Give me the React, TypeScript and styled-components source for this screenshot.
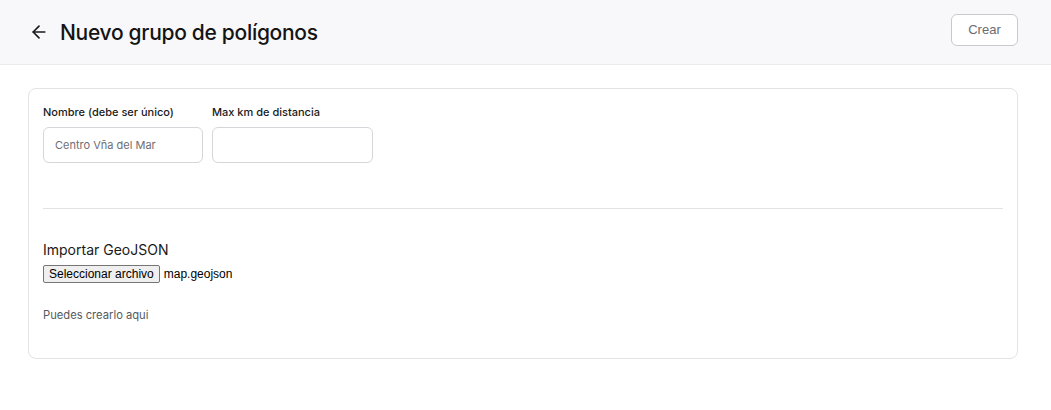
import React from "react";
import styled, { createGlobalStyle } from "styled-components";

const Global = createGlobalStyle`
  html, body { margin: 0; padding: 0; background: #ffffff; }
  body { font-family: Inter, "Noto Sans", sans-serif; color: #1a1a1a; }
  * { box-sizing: border-box; }
`;

const Header = styled.header`
  height: 65px;
  background: #f8f8fa;
  border-bottom: 1px solid #ececef;
  display: flex;
  align-items: center;
  justify-content: space-between;
  padding: 0 33px 0 29px;
`;

const TitleGroup = styled.div`
  display: flex;
  align-items: center;
  gap: 11px;
`;

const BackButton = styled.button`
  border: 0;
  background: transparent;
  padding: 0;
  display: flex;
  align-items: center;
  color: #1a1a1a;
  cursor: pointer;
`;

const Title = styled.h1`
  margin: 0;
  font-size: 21px;
  font-weight: 500;
  letter-spacing: -0.3px;
  color: #141414;
`;

const CreateButton = styled.button`
  width: 67px;
  height: 32px;
  border: 1px solid #c9c9cc;
  border-radius: 6px;
  background: #ffffff;
  color: #6b6b70;
  font-family: "Liberation Sans", Arial, sans-serif;
  font-size: 13px;
  margin-top: -5px;
`;

const Main = styled.main`
  padding: 23px 33px 0 28px;
`;

const Card = styled.section`
  border: 1px solid #e3e3e6;
  border-radius: 8px;
  padding: 16px 14px 35px 14px;
  display: flex;
  flex-direction: column;
`;

const FieldRow = styled.div`
  display: flex;
  gap: 9px;
  padding-bottom: 45px;
`;

const Field = styled.label`
  display: flex;
  flex-direction: column;
  gap: 7px;
`;

const LabelText = styled.span`
  font-size: 11px;
  font-weight: 500;
  color: #1a1a1a;
  line-height: 15px;
`;

const TextInput = styled.input<{ $wide?: boolean }>`
  width: ${(p) => (p.$wide ? "161px" : "160px")};
  height: 36px;
  border: 1px solid #d6d6da;
  border-radius: 6px;
  padding: 0 11px;
  font-family: Inter, "Noto Sans", sans-serif;
  font-size: 11px;
  color: #1a1a1a;
  outline: none;
  &::placeholder { color: #6e6e73; }
`;

const Divider = styled.hr`
  margin: 0;
  border: 0;
  border-top: 1px solid #e3e3e6;
`;

const ImportSection = styled.div`
  padding-top: 31px;
  display: flex;
  flex-direction: column;
`;

const SectionTitle = styled.h2`
  margin: 0 0 5px 0;
  font-size: 14px;
  font-weight: 400;
  color: #1a1a1a;
  line-height: 20px;
`;

const FileRow = styled.div`
  display: flex;
  align-items: center;
  gap: 4px;
`;

const FileButton = styled.button`
  height: 18px;
  padding: 0 5px;
  border: 1px solid #767676;
  border-radius: 2px;
  background: #efefef;
  font-family: "Liberation Sans", Arial, sans-serif;
  font-size: 12px;
  color: #000;
  line-height: 16px;
`;

const FileName = styled.span`
  font-family: "Liberation Sans", Arial, sans-serif;
  font-size: 12px;
  color: #000;
`;

const Hint = styled.p`
  margin: 25px 0 0 0;
  font-size: 11.2px;
  color: #555a60;
  line-height: 15px;
`;

export default function App() {
  return (
    <>
      <Global />
      <Header>
        <TitleGroup>
          <BackButton aria-label="Volver">
            <svg width="20" height="20" viewBox="0 0 24 24" fill="none" stroke="currentColor" strokeWidth="2" strokeLinecap="round" strokeLinejoin="round">
              <path d="M19 12H5" />
              <path d="M12 19l-7-7 7-7" />
            </svg>
          </BackButton>
          <Title>Nuevo grupo de polígonos</Title>
        </TitleGroup>
        <CreateButton>Crear</CreateButton>
      </Header>
      <Main>
        <Card>
          <FieldRow>
            <Field>
              <LabelText>Nombre (debe ser único)</LabelText>
              <TextInput placeholder="Centro Vña del Mar" />
            </Field>
            <Field>
              <LabelText>Max km de distancia</LabelText>
              <TextInput $wide />
            </Field>
          </FieldRow>
          <Divider />
          <ImportSection>
            <SectionTitle>Importar GeoJSON</SectionTitle>
            <FileRow>
              <FileButton>Seleccionar archivo</FileButton>
              <FileName>map.geojson</FileName>
            </FileRow>
            <Hint>Puedes crearlo aqui</Hint>
          </ImportSection>
        </Card>
      </Main>
    </>
  );
}
